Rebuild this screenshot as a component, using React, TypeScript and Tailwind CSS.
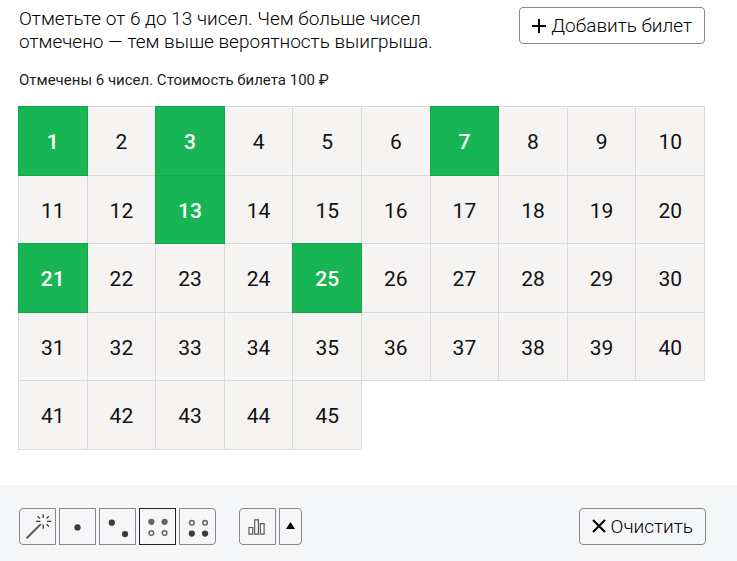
import { useState } from 'react';
import type { ReactNode } from 'react';
import clsx from 'clsx';

const TOTAL = 45;
const MIN_MARKED = 6;
const MAX_MARKED = 13;
const numbers = Array.from({ length: TOTAL }, (_, i) => i + 1);

function WandIcon() {
  return (
    <svg width="37" height="37" viewBox="0 0 37 37" fill="none" stroke="#3c3c3c">
      <path d="M7 31 22 16" stroke="#5a5a5a" strokeWidth="2.2" />
      <path
        d="M24.5 5.5v4M24.5 16.5v4.5M17 13h4.5M28.5 13H33M18.5 7.5l2.5 2.5M30.5 7.5 28 10M28 16l2.5 2.5"
        strokeWidth="1.4"
      />
    </svg>
  );
}

function ChartIcon() {
  return (
    <svg width="37" height="37" viewBox="0 0 37 37" fill="none" stroke="#555">
      <path d="M9.500 19.500h4v7h-4zM15.500 11.500h4v15h-4zM21.500 15.500h4v11h-4z" strokeWidth="1.200" />
    </svg>
  );
}

type Dot = { x: number; y: number; kind: 'solid' | 'soft' | 'ring' };

function DotsIcon({ dots }: { dots: Dot[] }) {
  return (
    <svg width="37" height="37" viewBox="0 0 37 37">
      {dots.map((dot) =>
        dot.kind === 'ring' ? (
          <circle key={`${dot.x}-${dot.y}`} cx={dot.x} cy={dot.y} r="2.4" fill="none" stroke="#666" strokeWidth="1.6" />
        ) : (
          <circle key={`${dot.x}-${dot.y}`} cx={dot.x} cy={dot.y} r="3.3" fill={dot.kind === 'solid' ? '#3a3a3a' : '#666'} />
        )
      )}
    </svg>
  );
}

const modes: { label: string; icon: ReactNode }[] = [
  { label: 'Случайные числа', icon: <WandIcon /> },
  { label: 'Нечётные', icon: <DotsIcon dots={[{ x: 18.5, y: 19.5, kind: 'solid' }]} /> },
  {
    label: 'Чётные',
    icon: (
      <DotsIcon
        dots={[
          { x: 12.5, y: 14.5, kind: 'solid' },
          { x: 26.5, y: 26.5, kind: 'solid' },
        ]}
      />
    ),
  },
  {
    label: 'Верхняя половина',
    icon: (
      <DotsIcon
        dots={[
          { x: 12, y: 13.5, kind: 'soft' },
          { x: 26, y: 13.5, kind: 'soft' },
          { x: 12, y: 25.5, kind: 'ring' },
          { x: 26, y: 25.5, kind: 'ring' },
        ]}
      />
    ),
  },
  {
    label: 'Нижняя половина',
    icon: (
      <DotsIcon
        dots={[
          { x: 12.5, y: 14.5, kind: 'ring' },
          { x: 26.5, y: 14.5, kind: 'ring' },
          { x: 12.5, y: 26, kind: 'solid' },
          { x: 26.5, y: 26, kind: 'solid' },
        ]}
      />
    ),
  },
];

export default function App() {
  const [marked, setMarked] = useState<number[]>([1, 3, 7, 13, 21, 25]);
  const [mode, setMode] = useState(3);

  const toggle = (n: number) => {
    if (marked.includes(n)) {
      setMarked(marked.filter((m) => m !== n));
    } else if (marked.length < MAX_MARKED) {
      setMarked([...marked, n]);
    }
  };

  return (
    <div className="min-h-screen flex flex-col bg-white text-black font-['Roboto','Liberation_Sans',sans-serif]">
      <main className="grow pl-[18px] pr-8 pt-[7px] pb-9">
        <div className="flex items-start justify-between pl-px">
          <p className="max-w-[430px] text-[19px] leading-[23px] font-light">
            {`Отметьте от ${MIN_MARKED} до ${MAX_MARKED} чисел. Чем больше чисел отмечено — тем выше вероятность выигрыша.`}
          </p>
          <button className="flex items-center gap-[5px] h-[37px] px-3 rounded border border-[#888] text-[19px] font-light whitespace-nowrap">
            <svg width="14" height="14" viewBox="0 0 14 14" stroke="black" strokeWidth="2">
              <path d="M7 0v14M0 7h14" />
            </svg>
            <span className="pt-0.5">Добавить билет</span>
          </button>
        </div>

        <p className="mt-[17px] pl-px text-[15px] leading-5 text-[#222]">
          {`Отмечены ${marked.length} чисел. Стоимость билета 100 ₽`}
        </p>

        <div className="mt-4 mr-px grid grid-cols-10">
          {numbers.map((n) => {
            const active = marked.includes(n);
            return (
              <button
                key={n}
                aria-pressed={active}
                onClick={() => toggle(n)}
                className={clsx(
                  'aspect-square -mr-px -mb-px pt-1 border text-[21px]',
                  active
                    ? 'relative border-[#15a64d] bg-[#18b555] text-white font-medium'
                    : 'border-[#dadada] bg-[#f5f4f3] text-[#111]'
                )}
              >
                {n}
              </button>
            );
          })}
        </div>
      </main>

      <footer className="flex items-center justify-between h-[76px] pl-[19px] pr-[31px] pt-1.5 bg-[#f5f6f8]">
        <div className="flex gap-[23px]">
          <div className="flex gap-[3px]">
            {modes.map((item, i) => (
              <button
                key={item.label}
                aria-label={item.label}
                aria-pressed={mode === i}
                onClick={() => setMode(i)}
                className={clsx(
                  'flex items-center justify-center size-[37px] border first:rounded-l last:rounded-r',
                  mode === i ? 'border-[#222]' : 'border-[#888]'
                )}
              >
                {item.icon}
              </button>
            ))}
          </div>
          <div className="flex gap-[3px]">
            <button aria-label="Статистика" className="flex items-center justify-center size-[37px] rounded-l border border-[#888]">
              <ChartIcon />
            </button>
            <button aria-label="Развернуть" className="flex items-center justify-center w-[23px] h-[37px] pb-0.5 rounded-r border border-[#888]">
              <svg width="9" height="7" viewBox="0 0 9 7">
                <path d="M4.500 0 9 7H0z" />
              </svg>
            </button>
          </div>
        </div>
        <button
          onClick={() => setMarked([])}
          className="flex items-center gap-[5px] h-[37px] px-3 rounded border border-[#888] text-[19px] font-light"
        >
          <svg width="14" height="14" viewBox="0 0 14 14" stroke="black" strokeWidth="2">
            <path d="m1 1 12 12M13 1 1 13" />
          </svg>
          <span className="pt-0.5">Очистить</span>
        </button>
      </footer>
    </div>
  );
}
